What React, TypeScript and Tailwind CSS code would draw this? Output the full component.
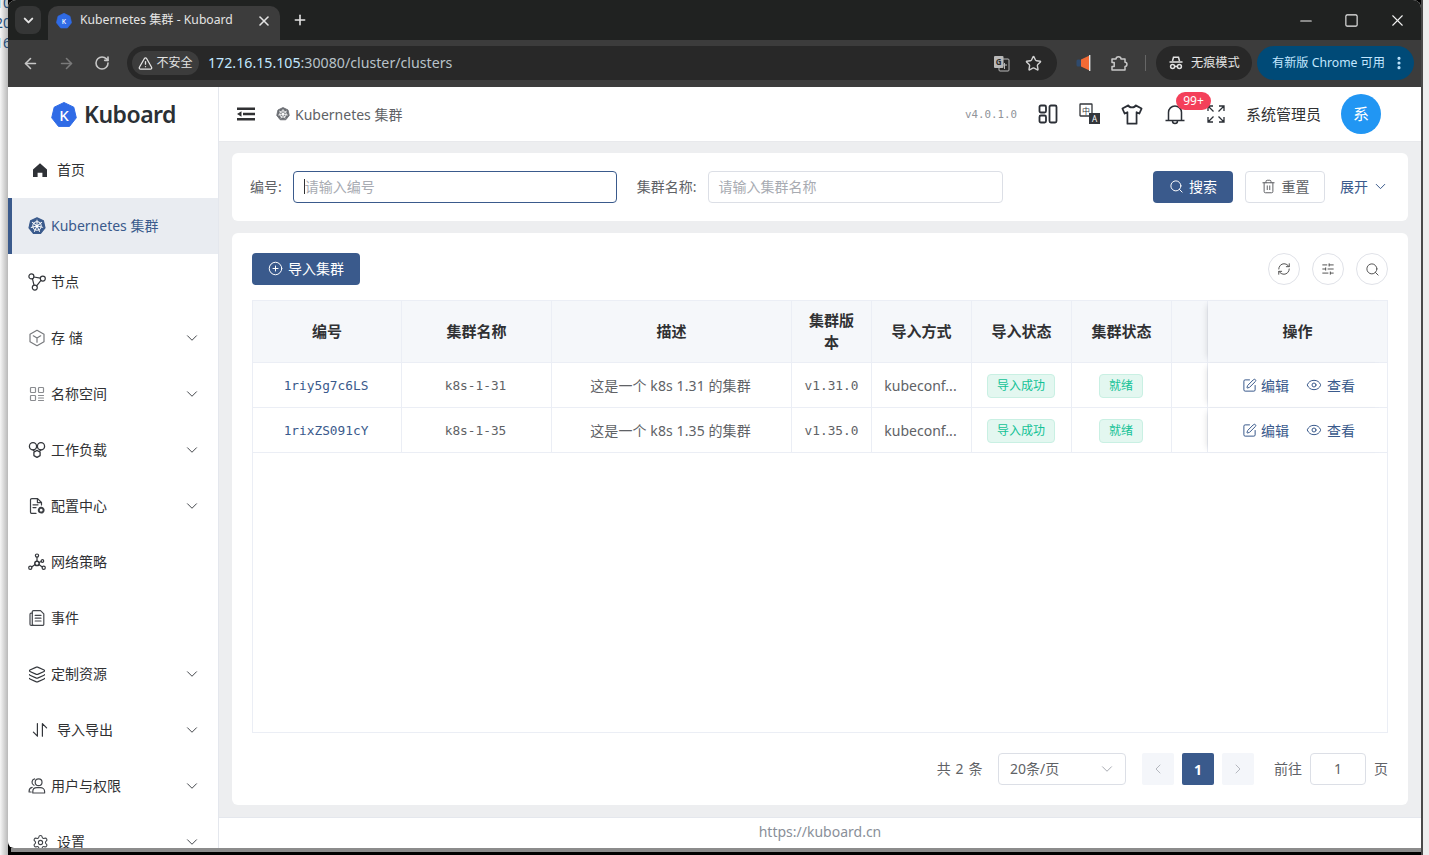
import React from "react";
import {
  ChevronDown, ChevronLeft, ChevronRight, ArrowLeft, ArrowRight, RotateCw, Star, X, Plus, Minus, Square,
  TriangleAlert, EllipsisVertical, Search, Trash2, CirclePlus, RefreshCw, SlidersHorizontal, SquarePen, Eye, Settings, Layers,
} from "lucide-react";

const SANS = "font-['Noto_Sans','Noto_Sans_CJK_SC',sans-serif]";
const MONO = "font-['DejaVu_Sans_Mono',monospace]";

function Wheel({ size = 18, bg = "#3a5a8c" }: { size?: number; bg?: string }) {
  const spokes = [0, 51.4, 102.8, 154.3, 205.7, 257.1, 308.6];
  return (
    <svg width={size} height={size} viewBox="0 0 24 24">
      <polygon points="12,1 20.6,5.1 22.7,14.4 16.8,21.9 7.2,21.9 1.3,14.4 3.4,5.1" fill={bg} stroke={bg} strokeWidth="1.5" strokeLinejoin="round" />
      <circle cx="12" cy="12" r="5.6" fill="none" stroke="#fff" strokeWidth="1.4" />
      {spokes.map((a) => (
        <line key={a} x1="12" y1="12" x2="12" y2="3.6" stroke="#fff" strokeWidth="1.3" transform={`rotate(${a} 12 12)`} />
      ))}
      <circle cx="12" cy="12" r="1.6" fill="#fff" />
    </svg>
  );
}

function KLogo({ size = 26, fs = 15 }: { size?: number; fs?: number }) {
  return (
    <svg width={size} height={size} viewBox="0 0 26 26">
      <polygon points="13,0.5 22.8,5.2 25.3,15.8 18.5,24.4 7.5,24.4 0.7,15.8 3.2,5.2" fill="#2f6be6" stroke="#2f6be6" strokeLinejoin="round" />
      <text x="13" y="18.5" textAnchor="middle" fontSize={fs} fontWeight="500" fill="#fff" fontFamily="Noto Sans, sans-serif">K</text>
    </svg>
  );
}

const S = { fill: "none", stroke: "currentColor", strokeWidth: 1.2, strokeLinecap: "round", strokeLinejoin: "round" } as const;

const icons: Record<string, React.ReactNode> = {
  home: (
    <svg width="16" height="16" viewBox="0 0 16 16"><path d="M8 1.2 15 7.6V15h-4.6v-4.2H5.6V15H1V7.6Z" fill="#2f3237" /></svg>
  ),
  wheel: <Wheel />,
  node: (
    <svg width="18" height="18" viewBox="0 0 18 18" {...S} className="text-[#33363b]">
      <circle cx="3.4" cy="3.4" r="2.5" /><circle cx="14.8" cy="5.6" r="2.5" /><circle cx="6.8" cy="14.6" r="2.5" />
      <path d="M5.8 4 12.4 5.2M4.4 5.7 6 12.2M8.6 12.9 13 7.4" />
    </svg>
  ),
  storage: (
    <svg width="18" height="18" viewBox="0 0 18 18" {...S} className="text-[#77797d]">
      <path d="M9 1.3 16 5.2V12.8L9 16.7 2 12.8V5.2Z" /><path d="M9 9 5.3 6.8M9 9 12.7 6.8M9 9V13.2" />
    </svg>
  ),
  ns: (
    <svg width="18" height="18" viewBox="0 0 18 18" {...S} className="text-[#8a8c90]">
      <rect x="2.5" y="2.5" width="5" height="5" rx="0.8" /><rect x="2.5" y="10.5" width="5" height="5" rx="0.8" />
      <rect x="10.5" y="2.5" width="5" height="5" rx="0.8" /><path d="M10.5 10.5H15.5M10.5 13H15.5M10.5 15.5H15.5" />
    </svg>
  ),
  workload: (
    <svg width="18" height="18" viewBox="0 0 18 18" {...S} strokeWidth={1.3} className="text-[#33363b]">
      <path d="M9 9.4 12.1 11.2V14.6L9 16.4 5.9 14.6V11.2Z" /><circle cx="5" cy="5.2" r="3.6" /><circle cx="13" cy="5.2" r="3.6" />
      <path d="M5 8.8 6.4 10.4M13 8.8 11.6 10.4" />
    </svg>
  ),
  config: (
    <svg width="18" height="18" viewBox="0 0 18 18" {...S} className="text-[#3b3e43]">
      <path d="M8 16.4H3.8A1.3 1.3 0 0 1 2.5 15V2.9A1.3 1.3 0 0 1 3.8 1.6H9.6L13.5 5.5V8" />
      <path d="M9.4 1.8V5.6H13.4M5 7.8H10M5 10.6H8" />
      <circle cx="13.2" cy="13.2" r="2.4" strokeWidth="2" strokeDasharray="2 0.6" />
    </svg>
  ),
  net: (
    <svg width="18" height="18" viewBox="0 0 18 18" {...S} className="text-[#33363b]">
      <circle cx="9" cy="10.4" r="2.2" strokeWidth="1.5" /><circle cx="9" cy="2.6" r="1.6" /><circle cx="2.3" cy="14.8" r="1.6" /><circle cx="15.7" cy="14.8" r="1.6" />
      <circle cx="14.4" cy="8" r="1.3" /><path d="M9 4.2V8.2M7.1 11.6 3.7 14M10.9 11.6 14.3 14M11 9.5 13.2 8.5" />
    </svg>
  ),
  event: (
    <svg width="18" height="18" viewBox="0 0 18 18" {...S} className="text-[#44474c]">
      <path d="M5.5 1.6H12.5L15.8 4.9V15.2A1.2 1.2 0 0 1 14.6 16.4H5.5A1.2 1.2 0 0 1 4.3 15.2V2.8A1.2 1.2 0 0 1 5.5 1.6Z" />
      <path d="M4.3 4.2H3.2A1.2 1.2 0 0 0 2 5.4V15.2A1.2 1.2 0 0 0 3.2 16.4H5.5M7.2 6.4H13M7.2 9.2H13M7.2 12H13" />
    </svg>
  ),
  crd: <Layers size={19} strokeWidth={1.2} absoluteStrokeWidth className="text-[#33363b]" />,
  io: (
    <svg width="16" height="16" viewBox="0 0 16 16" {...S} className="text-[#33363b]">
      <path d="M5.4 1.6V14.2L1.4 10.2M10.4 14.2V1.6L14.6 5.8" />
    </svg>
  ),
  user: (
    <svg width="18" height="18" viewBox="0 0 18 18" {...S} className="text-[#44474c]">
      <circle cx="10.6" cy="5.2" r="3.4" /><path d="M4.8 16H16.6V14.4C16.6 12.2 14.6 10.6 12.4 10.6H8.9C6.6 10.6 4.8 12.2 4.8 14.4Z" />
      <path d="M6.6 1.9A3.4 3.4 0 0 0 6 8.3M4.2 10.4C2.4 10.8 1.1 12.2 1.1 14.2V15H3.2" />
    </svg>
  ),
  gear: <Settings size={17} strokeWidth={1.1} absoluteStrokeWidth className="text-[#44474c]" />,
};

const menu = [
  { k: "home", t: "首页", wide: true },
  { k: "wheel", t: "Kubernetes 集群", active: true },
  { k: "node", t: "节点" },
  { k: "storage", t: "存 储", arrow: true },
  { k: "ns", t: "名称空间", arrow: true },
  { k: "workload", t: "工作负载", arrow: true },
  { k: "config", t: "配置中心", arrow: true },
  { k: "net", t: "网络策略" },
  { k: "event", t: "事件" },
  { k: "crd", t: "定制资源", arrow: true },
  { k: "io", t: "导入导出", arrow: true, wide: true },
  { k: "user", t: "用户与权限", arrow: true },
  { k: "gear", t: "设置", arrow: true, wide: true },
];

function MenuItem({ k, t, active, arrow, wide }: { k: string; t: string; active?: boolean; arrow?: boolean; wide?: boolean }) {
  return (
    <div className={`h-[56px] shrink-0 flex items-center pr-[17px] text-[14px] ${active ? "bg-[#e9ecf1] border-l-[4px] border-[#3a5a8c] pl-[16px] text-[#3a5a8c]" : "text-[#303133] pl-[20px]"}`}>
      <span className={`flex items-center justify-center ${wide ? "w-[24px] mr-[5px]" : "w-[18px] mr-[5px]"}`}>{icons[k]}</span>
      <span className="flex-1 leading-none">{t}</span>
      {arrow && <ChevronDown size={18} strokeWidth={1} absoluteStrokeWidth className="text-[#44474c]" />}
    </div>
  );
}

const widths = ["w-[149px]", "w-[150px]", "w-[240px]", "w-[80px]", "w-[100px]", "w-[100px]", "w-[100px]", "w-[36px]"];

function Cell({ i, children, cls = "" }: { i: number; children?: React.ReactNode; cls?: string }) {
  return <div className={`${widths[i]} shrink-0 h-full flex items-center justify-center text-center border-r border-[#ebeef5] ${cls}`}>{children}</div>;
}

function Tag({ children }: { children: React.ReactNode }) {
  return (
    <span className="h-[24px] px-[8.5px] inline-flex items-center rounded-[4px] bg-[#e3f7f0] border border-[#c9f0e3] text-[#13c296] text-[12px] leading-none">{children}</span>
  );
}

function Row({ id, name, desc, ver }: { id: string; name: string; desc: string; ver: string }) {
  return (
    <div className="h-[45px] flex border-b border-[#ebeef5] text-[14px] text-[#606266]">
      <Cell i={0} cls={`${MONO} text-[12.8px] text-[#3a5a8c] pt-[2px] pr-[2px]`}>{id}</Cell>
      <Cell i={1} cls={`${MONO} text-[12.8px] pt-[2px] pr-[2px]`}>{name}</Cell>
      <Cell i={2} cls="tracking-[0.1px] pr-[2px]">{desc}</Cell>
      <Cell i={3} cls={`${MONO} text-[12.8px] pt-[2px]`}>{ver}</Cell>
      <Cell i={4} cls="pr-[2px]">kubeconf...</Cell>
      <Cell i={5} cls="pt-[2px] pr-[1px]"><Tag>导入成功</Tag></Cell>
      <Cell i={6} cls="pt-[2px] pr-[1px]"><Tag>就绪</Tag></Cell>
      <Cell i={7} />
      <div className="w-[179px] shrink-0 h-full bg-white flex items-center justify-center gap-[17px] pl-[2px] text-[#3a5a8c] shadow-[-5px_0_6px_-4px_rgba(0,0,0,0.12)]">
        <span className="flex items-center gap-[4px]"><SquarePen size={15} strokeWidth={1} absoluteStrokeWidth />编辑</span>
        <span className="flex items-center gap-[5px]"><Eye size={16} strokeWidth={1} absoluteStrokeWidth />查看</span>
      </div>
    </div>
  );
}

function RoundBtn({ children }: { children: React.ReactNode }) {
  return <div className="w-[32px] h-[32px] rounded-full border border-[#e0e2e8] flex items-center justify-center text-[#555]">{children}</div>;
}

export default function App() {
  return (
    <div className={`w-[1429px] h-[855px] overflow-hidden flex ${SANS}`}>
      {/* desktop strip, left */}
      <div className="w-[8px] shrink-0 overflow-hidden bg-gradient-to-r from-[#f6f6f6] to-[#b9b9b9] text-[14px] leading-[20px] text-[#1f4e79] whitespace-nowrap">
        <div className="-ml-[5px] -mt-[7px]">10</div>
        <div className="-ml-[5px]">20</div>
        <div className="-ml-[5px]">16</div>
      </div>

      <div className="w-[1413px] shrink-0 flex flex-col bg-black">
        {/* browser window */}
        <div className="h-[848px] shrink-0 flex flex-col rounded-t-[8px] rounded-bl-[6px] overflow-hidden bg-white">
          {/* tab strip */}
          <div className="h-[40px] shrink-0 bg-[#202221] flex items-end pl-[7px] pr-[1px]">
            <div className="w-[26px] h-[28px] mb-[6px] rounded-[8px] bg-[#353636] flex items-center justify-center text-[#e3e3e3]">
              <ChevronDown size={15} strokeWidth={2} absoluteStrokeWidth />
            </div>
            <div className="ml-[7px] w-[232px] h-[34px] rounded-t-[10px] bg-[#3c3c3c] flex items-center pl-[8px] pr-[8px] pb-[5px] text-[12.2px] text-[#e3e3e3]">
              <KLogo size={16} fs={11} />
              <span className="ml-[8px] flex-1">Kubernetes 集群 - Kuboard</span>
              <X size={16} strokeWidth={1.6} absoluteStrokeWidth />
            </div>
            <Plus size={16} strokeWidth={1.6} absoluteStrokeWidth className="ml-[12px] mb-[12px] text-[#e3e3e3]" />
            <div className="flex-1" />
            <div className="flex items-center gap-[29px] mb-[10px] mr-[13px] text-[#f0f0f0]">
              <Minus size={18} strokeWidth={1.1} absoluteStrokeWidth />
              <Square size={15} strokeWidth={1.1} absoluteStrokeWidth />
              <X size={19} strokeWidth={1.1} absoluteStrokeWidth />
            </div>
          </div>

          {/* toolbar */}
          <div className="h-[47px] shrink-0 bg-[#3c3c3c] flex items-center pl-[14px] pr-[6px] pb-[1px] text-[#c7c7c7]">
            <ArrowLeft size={17} strokeWidth={1.6} absoluteStrokeWidth />
            <ArrowRight size={17} strokeWidth={1.6} absoluteStrokeWidth className="ml-[19px] text-[#7a7a7a]" />
            <RotateCw size={16} strokeWidth={1.6} absoluteStrokeWidth className="ml-[19px]" />
            <div className="ml-[17px] w-[930px] h-[34px] rounded-full bg-[#282828] flex items-center pl-[5px] pr-[15px]">
              <div className="h-[24px] w-[67px] rounded-full bg-[#3c3c3c] flex items-center justify-center gap-[3px] text-[12px] text-[#e3e3e3]">
                <TriangleAlert size={15} strokeWidth={1.3} absoluteStrokeWidth />不安全
              </div>
              <div className="ml-[9px] flex-1 pb-[1px] text-[14.2px] text-[#c2e7ff]">172.16.15.105<span className="text-[#b8c2c9]">:30080/cluster/clusters</span></div>
              <svg width="17" height="17" viewBox="0 0 17 17" className="mr-[15px]">
                <rect x="6" y="4" width="10" height="12" rx="1" fill="#282828" stroke="#b9b9b9" />
                <rect x="1" y="1" width="9.5" height="12" rx="1" fill="#b9b9b9" />
                <text x="5.7" y="10" textAnchor="middle" fontSize="8" fontWeight="700" fill="#282828" fontFamily="Noto Sans">G</text>
                <path d="M11.5 8V14M9.5 10H14" fill="none" stroke="#b9b9b9" />
              </svg>
              <Star size={17} strokeWidth={1.4} absoluteStrokeWidth className="text-[#d0d0d0]" />
            </div>
            <svg width="16" height="18" viewBox="0 0 16 18" className="ml-[18px]">
              <path d="M14.5 1.5V16.5L6 12.5V5.5Z" fill="#f26a35" />
              <rect x="1.5" y="5.5" width="4.5" height="7" rx="1.5" fill="#2f4a6d" />
              <rect x="14" y="1" width="1.4" height="16" fill="#e3e3e3" />
            </svg>
            <svg width="18" height="18" viewBox="0 0 18 18" fill="none" stroke="#c7c7c7" strokeWidth="1.5" strokeLinejoin="round" className="ml-[19px]">
              <path d="M2 5H6C6 2 11 2 11 5H15V8.2C17.6 8.2 17.6 12.4 15 12.4V16H2V12.4H4.2V8.6H2Z" />
            </svg>
            <div className="ml-[17px] w-[1px] h-[16px] bg-[#666]" />
            <div className="ml-[10px] w-[96px] h-[34px] rounded-full bg-[#282828] flex items-center pl-[12px] gap-[7px] text-[12.2px] text-[#e3e3e3]">
              <svg width="16" height="14" viewBox="0 0 16 14" fill="none" stroke="#e3e3e3" strokeWidth="1.5">
                <path d="M4.5 5 5.5 1.2H10.5L11.5 5M1.5 6H14.5" /><circle cx="4.6" cy="10.6" r="2" /><circle cx="11.4" cy="10.6" r="2" /><path d="M6.6 10.4H9.4" />
              </svg>
              无痕模式
            </div>
            <div className="ml-[5px] w-[157px] h-[34px] rounded-full bg-[#004a77] flex items-center pl-[15px] pr-[7px] text-[12.2px] text-[#c2e7ff]">
              <span className="flex-1">有新版 Chrome 可用</span>
              <EllipsisVertical size={16} strokeWidth={1.8} absoluteStrokeWidth />
            </div>
          </div>

          {/* page */}
          <div className="flex-1 flex min-h-0">
            {/* sidebar */}
            <aside className="w-[211px] shrink-0 border-r border-[#e4e7ed] flex flex-col overflow-hidden">
              <div className="h-[55px] shrink-0 flex items-center pl-[43px]">
                <KLogo />
                <span className="ml-[7px] text-[23px] font-semibold leading-none text-[#2b3035] tracking-[-0.5px]">Kuboard</span>
              </div>
              {menu.map((m) => <MenuItem key={m.t} {...m} />)}
            </aside>

            {/* main */}
            <div className="flex-1 flex flex-col min-w-0">
              <header className="h-[55px] shrink-0 border-b border-[#e8e9ec] flex items-center pl-[18px] text-[14px]">
                <svg width="18" height="14" viewBox="0 0 18 14"><path d="M0 0.5H18V3H0ZM6 5.8H18V8.2H6ZM0 11H18V13.5H0Z" fill="#303133" /><path d="M0 7 4.5 4.2V9.8Z" fill="#303133" /></svg>
                <span className="ml-[21px] mr-[5px]"><Wheel size={14} bg="#6b6e73" /></span>
                <span className="text-[#606266]">Kubernetes 集群</span>
                <div className="flex-1" />
                <span className={`${MONO} text-[10.8px] text-[#909399] mt-[3px]`}>v4.0.1.0</span>
                <svg width="20" height="20" viewBox="0 0 20 20" fill="none" stroke="#2b2f36" strokeWidth="1.8" className="ml-[21px]">
                  <rect x="1.5" y="1.5" width="6.5" height="7" rx="1.4" /><rect x="1.5" y="11.5" width="6.5" height="7" rx="1.4" /><rect x="11.5" y="1.5" width="7" height="17" rx="1.4" />
                </svg>
                <svg width="22" height="22" viewBox="0 0 22 22" className="ml-[21px]">
                  <rect x="1" y="1" width="12" height="12" rx="0.5" fill="#fff" stroke="#33363b" strokeWidth="1.3" />
                  <text x="7" y="10.5" textAnchor="middle" fontSize="8" fill="#33363b" fontFamily="Noto Sans CJK SC">中</text>
                  <rect x="10" y="10" width="11" height="11" fill="#33363b" />
                  <text x="15.5" y="19" textAnchor="middle" fontSize="8" fill="#fff" fontFamily="Noto Sans">A</text>
                </svg>
                <svg width="22" height="21" viewBox="0 0 24 23" fill="none" stroke="#2b2f36" strokeWidth="1.9" strokeLinejoin="round" className="ml-[20px]">
                  <path d="M8 1.5 1.5 5 4 10.5 7 9V21.5H17V9L20 10.5 22.5 5 16 1.5C15 4.5 9 4.5 8 1.5Z" />
                </svg>
                <div className="relative ml-[22px] w-[20px] h-[22px]">
                  <svg width="20" height="22" viewBox="0 0 20 22" fill="none" stroke="#2b2f36" strokeWidth="1.5">
                    <path d="M3.5 17V9.5A6.5 6.5 0 0 1 16.5 9.5V17M0.5 17.5H19.5M7.5 18A2.5 2.5 0 0 0 12.5 18" />
                  </svg>
                  <span className="absolute left-[11px] -top-[11px] w-[35px] h-[18px] rounded-full bg-[#f4405a] text-white text-[12px] leading-[18px] text-center">99+</span>
                </div>
                <svg width="18" height="18" viewBox="0 0 18 18" fill="none" stroke="#2b2f36" strokeWidth="1.3" className="ml-[22px]">
                  <path d="M1 6V1H6M1 1 6.5 6.5M17 12V17H12M17 17 11.5 11.5M12 1H17V6M17 1 11.5 6.5M6 17H1V12M1 17 6.5 11.5" />
                </svg>
                <span className="ml-[21px] text-[15px] text-[#303133]">系统管理员</span>
                <div className="ml-[20px] mr-[40px] w-[40px] h-[40px] rounded-full bg-[#2196f3] text-white text-[16px] flex items-center justify-center">系</div>
              </header>

              <main className="flex-1 min-h-0 bg-[#edeef0] px-[13px] pt-[11px] pb-[12px] flex flex-col gap-[12px]">
                {/* search card */}
                <section className="h-[68px] shrink-0 bg-white rounded-[6px] flex items-center pl-[18px] pr-[19px] text-[14px] text-[#606266]">
                  <span className="pb-[2px]">编号:</span>
                  <div className="ml-[11px] w-[324px] h-[32px] rounded-[4px] border border-[#3a5a8c] flex items-center pl-[10px] pb-[1px] text-[#a8abb2]">
                    <span className="w-[1px] h-[15px] bg-[#303133]" />请输入编号
                  </div>
                  <span className="ml-[20px] pb-[2px]">集群名称:</span>
                  <div className="ml-[11px] w-[295px] h-[32px] rounded-[4px] border border-[#dcdfe6] flex items-center pl-[10px] pb-[1px] text-[#a8abb2]">请输入集群名称</div>
                  <div className="flex-1" />
                  <div className="w-[80px] h-[32px] rounded-[4px] bg-[#3a5a8c] text-white flex items-center justify-center gap-[5px] pb-[1px]"><Search size={15} strokeWidth={1} absoluteStrokeWidth />搜索</div>
                  <div className="ml-[12px] w-[80px] h-[32px] rounded-[4px] border border-[#dcdfe6] flex items-center justify-center gap-[6px] pb-[1px]"><Trash2 size={15} strokeWidth={1} absoluteStrokeWidth />重置</div>
                  <div className="ml-[15px] flex items-center gap-[4px] pb-[1px] text-[#3a5a8c]">展开<ChevronDown size={17} strokeWidth={1} absoluteStrokeWidth /></div>
                </section>

                {/* table card */}
                <section className="flex-1 min-h-0 bg-white rounded-[6px] pt-[20px] px-[20px] flex flex-col">
                  <div className="h-[32px] shrink-0 flex items-center justify-between">
                    <div className="w-[108px] h-[32px] rounded-[4px] bg-[#3a5a8c] text-white text-[14px] flex items-center justify-center gap-[5px] pb-[1px]">
                      <CirclePlus size={15} strokeWidth={1} absoluteStrokeWidth />导入集群
                    </div>
                    <div className="flex gap-[12px]">
                      <RoundBtn><RefreshCw size={14} strokeWidth={1} absoluteStrokeWidth /></RoundBtn>
                      <RoundBtn><SlidersHorizontal size={14} strokeWidth={1} absoluteStrokeWidth /></RoundBtn>
                      <RoundBtn><Search size={15} strokeWidth={1} absoluteStrokeWidth /></RoundBtn>
                    </div>
                  </div>

                  <div className="mt-[15px] h-[433px] shrink-0 border border-[#ebeef5]">
                    <div className="h-[62px] flex bg-[#f5f7fa] border-b border-[#ebeef5] text-[15px] font-bold text-[#303133]">
                      <Cell i={0} cls="pb-[1px]">编号</Cell>
                      <Cell i={1} cls="pb-[1px]">集群名称</Cell>
                      <Cell i={2} cls="pb-[1px]">描述</Cell>
                      <Cell i={3} cls="leading-[22px] px-[12px] pb-[1px]">集群版本</Cell>
                      <Cell i={4} cls="pb-[1px]">导入方式</Cell>
                      <Cell i={5} cls="pb-[1px]">导入状态</Cell>
                      <Cell i={6} cls="pb-[1px]">集群状态</Cell>
                      <Cell i={7} />
                      <div className="w-[179px] shrink-0 flex items-center justify-center pb-[1px] shadow-[-5px_0_6px_-4px_rgba(0,0,0,0.12)]">操作</div>
                    </div>
                    <Row id="1riy5g7c6LS" name="k8s-1-31" desc="这是一个 k8s 1.31 的集群" ver="v1.31.0" />
                    <Row id="1rixZS091cY" name="k8s-1-35" desc="这是一个 k8s 1.35 的集群" ver="v1.35.0" />
                  </div>

                  <div className="mt-[20px] h-[32px] shrink-0 flex items-center justify-end text-[14px] text-[#606266]">
                    <span className="tracking-[0.6px] pb-[2px]">共 2 条</span>
                    <div className="ml-[15px] w-[128px] h-[32px] rounded-[4px] border border-[#dcdfe6] flex items-center pl-[11px] pr-[9px] pb-[1px]">
                      <span className="flex-1">20条/页</span><ChevronDown size={18} strokeWidth={1} absoluteStrokeWidth className="text-[#a8abb2]" />
                    </div>
                    <div className="ml-[16px] w-[32px] h-[32px] rounded-[2px] bg-[#f4f6fa] flex items-center justify-center text-[#b5b8bf]"><ChevronLeft size={16} strokeWidth={1} absoluteStrokeWidth /></div>
                    <div className="ml-[8px] w-[32px] h-[32px] rounded-[2px] bg-[#3a5a8c] text-white font-bold flex items-center justify-center">1</div>
                    <div className="ml-[8px] w-[32px] h-[32px] rounded-[2px] bg-[#f4f6fa] flex items-center justify-center text-[#b5b8bf]"><ChevronRight size={16} strokeWidth={1} absoluteStrokeWidth /></div>
                    <span className="ml-[20px] pb-[2px]">前往</span>
                    <div className="ml-[8px] w-[56px] h-[32px] rounded-[4px] border border-[#dcdfe6] flex items-center justify-center pb-[1px]">1</div>
                    <span className="ml-[8px] pb-[2px]">页</span>
                  </div>
                </section>
              </main>

              <footer className="h-[31px] shrink-0 border-t border-[#e4e7ed] flex items-center justify-center pb-[3px] text-[14px] text-[#8a8f99]">https://kuboard.cn</footer>
            </div>
          </div>
        </div>
        <div className="h-[4px] shrink-0 bg-[#8c8c8c] ml-[3px]" />
      </div>

      {/* desktop strip, right */}
      <div className="flex-1 border-l-[2px] border-[#4a4a4a] bg-[#eeeeee]" />
    </div>
  );
}
